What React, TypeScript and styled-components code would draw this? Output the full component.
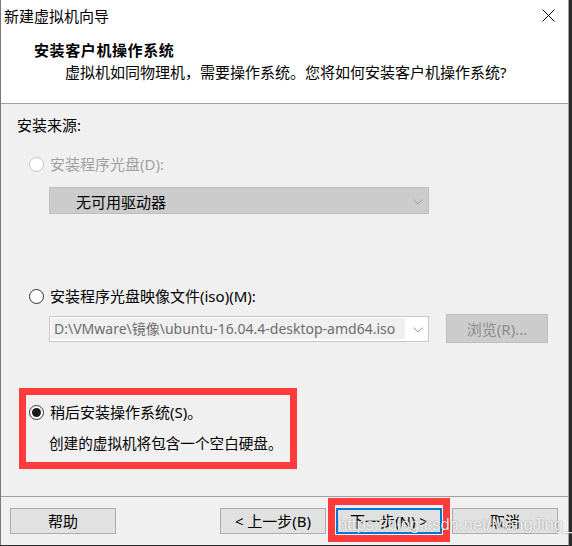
import React from 'react';
import styled, { createGlobalStyle, css } from 'styled-components';

const GlobalStyle = createGlobalStyle`
  html, body { margin: 0; padding: 0; background: #2b2b2b; }
  body {
    font-family: "Noto Sans", "Noto Sans CJK SC", sans-serif;
    font-size: 15px;
    color: #000;
  }
  * { box-sizing: border-box; }
`;

const Screen = styled.div`
  width: 572px;
  height: 546px;
  display: flex;
  background: #2b2b2b;
  overflow: hidden;
`;

const Window = styled.div`
  position: relative;
  width: 569px;
  height: 545px;
  border-left: 1px solid #7a7a7a;
  border-right: 1px solid #a0a0a0;
  display: flex;
  flex-direction: column;
  background: #f0f0f0;
`;

const Header = styled.div`
  height: 104px;
  background: #ffffff;
  border-bottom: 1px solid #a0a0a0;
  display: flex;
  flex-direction: column;
`;

const TitleBar = styled.div`
  height: 32px;
  display: flex;
  align-items: center;
  justify-content: space-between;
  padding-left: 3px;
`;

const WindowTitle = styled.span`
  font-size: 15px;
  line-height: 20px;
  color: #000;
`;

const CloseButton = styled.div`
  width: 40px;
  height: 32px;
  display: flex;
  align-items: center;
  justify-content: center;
  margin-top: -2px;
`;

const PageTitle = styled.div`
  margin-top: 8px;
  padding-left: 33px;
  font-weight: 700;
  font-size: 15px;
  letter-spacing: 0.6px;
  line-height: 20px;
`;

const PageSubtitle = styled.div`
  margin-top: 2px;
  padding-left: 64px;
  font-size: 15px;
  line-height: 20px;
  white-space: nowrap;
`;

const Body = styled.div`
  height: 393px;
  border-bottom: 1px solid #a0a0a0;
  padding: 11px 0 0 16px;
  display: flex;
  flex-direction: column;
  align-items: flex-start;
`;

const SectionLabel = styled.div`
  line-height: 20px;
  font-size: 15px;
`;

const RadioRow = styled.div<{ $disabled?: boolean; $mt?: number; $indent?: number }>`
  display: flex;
  align-items: center;
  height: 20px;
  margin-top: ${(p) => p.$mt ?? 0}px;
  padding-left: ${(p) => p.$indent ?? 12}px;
  gap: 6px;
  font-size: 15px;
  line-height: 20px;
  white-space: nowrap;
  color: ${(p) => (p.$disabled ? '#a0a0a0' : '#000')};
`;

const Radio = styled.span<{ $state: 'disabled' | 'normal' | 'checked' }>`
  width: 15px;
  height: 15px;
  border-radius: 50%;
  background: #fff;
  display: flex;
  align-items: center;
  justify-content: center;
  flex: none;
  border: 1px solid ${(p) => (p.$state === 'disabled' ? '#c4c4c4' : '#333333')};
  ${(p) =>
    p.$state === 'checked' &&
    css`
      &::after {
        content: '';
        width: 9px;
        height: 9px;
        border-radius: 50%;
        background: #1a1a1a;
      }
    `}
`;

const Combo = styled.div<{ $disabled?: boolean; $mt?: number; $h: number }>`
  width: 380px;
  height: ${(p) => p.$h}px;
  margin-top: ${(p) => p.$mt ?? 0}px;
  margin-left: ${(p) => (p.$disabled ? 32 : 0)}px;
  display: flex;
  align-items: center;
  justify-content: space-between;
  padding: 2px 5px 0 ${(p) => (p.$disabled ? 26 : 1)}px;
  border: 1px solid ${(p) => (p.$disabled ? '#bfbfbf' : '#c8c8c8')};
  background: ${(p) => (p.$disabled ? '#cccccc' : '#ffffff')};
  font-size: 15px;
  line-height: 20px;
`;

const ComboText = styled.span`
  color: #000;
`;

const ComboField = styled.span`
  flex: none;
  width: 354px;
  height: 21px;
  margin-top: -2px;
  background: #f0f0f0;
  color: #6d6d6d;
  padding-left: 3px;
  font-size: 14px;
  white-space: nowrap;
  overflow: hidden;
  line-height: 21px;
`;

const Chevron = styled.svg`
  flex: none;
  width: 10px;
  height: 6px;
`;

const FileRow = styled.div`
  margin-top: 8px;
  margin-left: 32px;
  display: flex;
  align-items: center;
  gap: 17px;
  height: 29px;
`;

const FlatButton = styled.div<{ $disabled?: boolean; $w?: number }>`
  width: ${(p) => p.$w ?? 106}px;
  height: ${(p) => (p.$disabled ? 29 : 26)}px;
  display: flex;
  align-items: center;
  justify-content: center;
  font-size: 15px;
  line-height: 20px;
  white-space: nowrap;
  background: ${(p) => (p.$disabled ? '#cccccc' : '#e1e1e1')};
  border: 1px solid ${(p) => (p.$disabled ? '#bfbfbf' : '#adadad')};
  color: ${(p) => (p.$disabled ? '#8c8c8c' : '#000')};
`;

const Highlight = styled.div`
  margin-top: 45px;
  margin-left: 2px;
  width: 278px;
  height: 81px;
  border: 7px solid #ff3b3b;
  padding-top: 7px;
  display: flex;
  flex-direction: column;
`;

const Description = styled.div`
  margin-top: 11px;
  padding-left: 23px;
  font-size: 14.6px;
  line-height: 20px;
  white-space: nowrap;
`;

const Footer = styled.div`
  flex: 1;
  display: flex;
  align-items: flex-start;
  padding: 11px 10px 0 9px;
`;

const NavGroup = styled.div`
  margin-left: auto;
  display: flex;
  gap: 10px;
`;

const NextWrap = styled.div`
  position: relative;
  &::after {
    content: '';
    position: absolute;
    left: -8px;
    right: -8px;
    top: -10px;
    bottom: -8px;
    border: 7px solid #ff3b3b;
    pointer-events: none;
  }
`;

const PrimaryButton = styled(FlatButton)`
  border: 2px solid #0078d7;
  background: #e1e1e1;
`;

const Watermark = styled.div`
  position: absolute;
  left: 337px;
  top: 514px;
  font-family: "Liberation Sans", Arial, sans-serif;
  font-size: 16.6px;
  line-height: 22px;
  color: rgba(255, 255, 255, 0.9);
  text-shadow: 0 0 1.5px rgba(0, 0, 0, 0.45);
  pointer-events: none;
  white-space: nowrap;
`;

const ChevronIcon: React.FC = () => (
  <Chevron viewBox="0 0 10 6">
    <path d="M0.5 0.5 L5 5 L9.5 0.5" fill="none" stroke="#9a9a9a" strokeWidth="1" />
  </Chevron>
);

export default function App() {
  return (
    <>
      <GlobalStyle />
      <Screen>
        <Window>
          <Header>
            <TitleBar>
              <WindowTitle>新建虚拟机向导</WindowTitle>
              <CloseButton>
                <svg width="13" height="13" viewBox="0 0 13 13">
                  <path d="M0.5 0.5 L12.5 12.5 M12.5 0.5 L0.5 12.5" stroke="#000" strokeWidth="1" fill="none" />
                </svg>
              </CloseButton>
            </TitleBar>
            <PageTitle>安装客户机操作系统</PageTitle>
            <PageSubtitle>虚拟机如同物理机，需要操作系统。您将如何安装客户机操作系统?</PageSubtitle>
          </Header>

          <Body>
            <SectionLabel>安装来源:</SectionLabel>

            <RadioRow $disabled $mt={19}>
              <Radio $state="disabled" />
              <span>安装程序光盘(D):</span>
            </RadioRow>

            <Combo $disabled $mt={13} $h={27}>
              <ComboText>无可用驱动器</ComboText>
              <ChevronIcon />
            </Combo>

            <RadioRow $mt={72}>
              <Radio $state="normal" />
              <span>安装程序光盘映像文件(iso)(M):</span>
            </RadioRow>

            <FileRow>
              <Combo $h={26}>
                <ComboField>D:\VMware\镜像\ubuntu-16.04.4-desktop-amd64.iso</ComboField>
                <ChevronIcon />
              </Combo>
              <FlatButton $disabled $w={102}>浏览(R)...</FlatButton>
            </FileRow>

            <Highlight>
              <RadioRow $indent={3}>
                <Radio $state="checked" />
                <span>稍后安装操作系统(S)。</span>
              </RadioRow>
              <Description>创建的虚拟机将包含一个空白硬盘。</Description>
            </Highlight>
          </Body>

          <Footer>
            <FlatButton>帮助</FlatButton>
            <NavGroup>
              <FlatButton>&lt; 上一步(B)</FlatButton>
              <NextWrap>
                <PrimaryButton>下一步(N) &gt;</PrimaryButton>
              </NextWrap>
              <FlatButton>取消</FlatButton>
            </NavGroup>
          </Footer>

          <Watermark>https://blog.csdn.net/MengJing_</Watermark>
        </Window>
      </Screen>
    </>
  );
}
